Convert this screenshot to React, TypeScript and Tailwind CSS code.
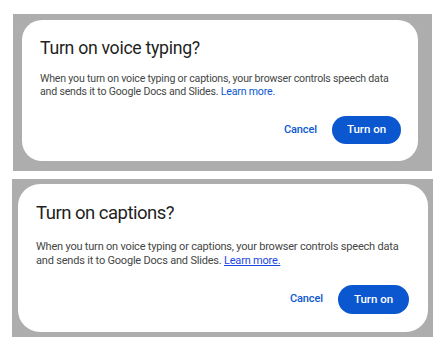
import React from "react";

type DialogProps = {
  title: string;
  underline?: boolean;
  big?: boolean;
};

function Dialog({ title, underline, big }: DialogProps) {
  return (
    <div
      className={
        big
          ? "rounded-[22px] bg-white pl-[18px] pr-[19px] pt-[17px] pb-[18px]"
          : "rounded-[20px] bg-white pl-[18px] pr-[17px] pt-[16px] pb-[17px]"
      }
    >
      <h2
        className={
          big
            ? "text-[18.5px] leading-[24px] tracking-[-0.5px] text-[#1f1f1f]"
            : "text-[17.7px] leading-[24px] tracking-[-0.3px] text-[#1f1f1f]"
        }
      >
        {title}
      </h2>
      <p
        className={
          big
            ? "mt-[15px] whitespace-nowrap text-[11px] leading-[14px] tracking-[-0.2px] text-[#444746]"
            : "mt-[12px] whitespace-nowrap text-[10.6px] leading-[13px] tracking-[-0.2px] text-[#444746]"
        }
      >
        When you turn on voice typing or captions, your browser controls speech data
        <br />
        and sends it to Google Docs and Slides.{" "}
        <a
          href="#"
          className={underline ? "text-[#1a47e0] underline" : "text-[#0b57d0]"}
        >
          Learn more.
        </a>
      </p>
      <div
        className={
          big
            ? "mt-[17px] flex items-center justify-end gap-[15px]"
            : "mt-[18px] flex items-center justify-end gap-[15px]"
        }
      >
        <button className="text-[11px] font-medium tracking-[-0.1px] text-[#0b57d0]">
          Cancel
        </button>
        <button
          className={
            big
              ? "h-[29px] w-[71px] rounded-full bg-[#0b57d0] text-[11.5px] font-medium text-white"
              : "h-[28px] w-[69px] rounded-full bg-[#0b57d0] text-[11.5px] font-medium text-white"
          }
        >
          Turn on
        </button>
      </div>
    </div>
  );
}

export default function App() {
  return (
    <div
      className="flex h-[345px] w-[442px] flex-col bg-white"
      style={{ fontFamily: "Roboto, 'Open Sans', sans-serif" }}
    >
      <div className="ml-[13px] mt-[14px] w-[419px] bg-[#adadad] pl-[9px] pt-[6px] pr-[14px] pb-[10px]">
        <Dialog title="Turn on voice typing?" />
      </div>
      <div className="ml-[12px] mt-[8px] w-[421px] bg-[#adadad] pl-[6px] pt-[5px] pr-[5px] pb-[5px]">
        <Dialog title="Turn on captions?" underline big />
      </div>
    </div>
  );
}
